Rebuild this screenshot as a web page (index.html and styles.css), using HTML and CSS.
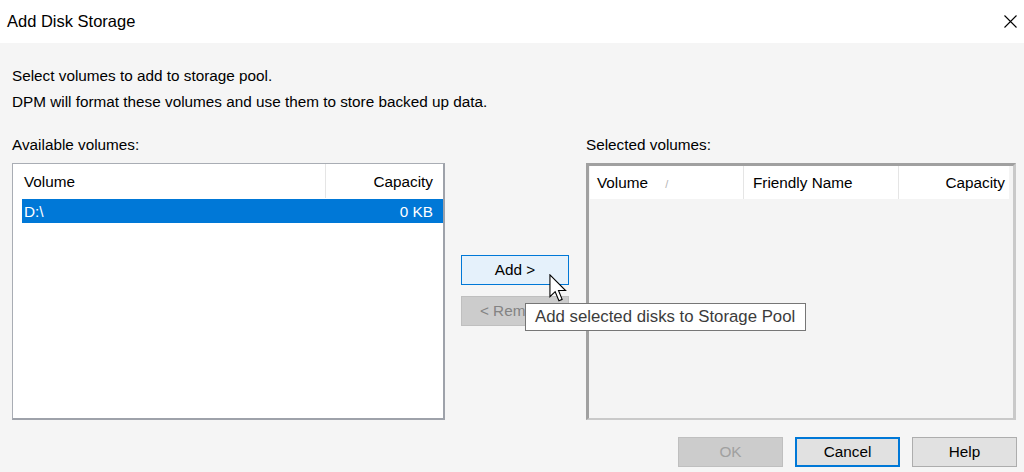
FILE: index.html
```html
<!DOCTYPE html>
<html lang="en">
<head>
    <meta charset="UTF-8">
    <title>Add Disk Storage</title>
    <link rel="stylesheet" href="styles.css">
</head>
<body>
    <div class="titlebar">
        <span class="title">Add Disk Storage</span>
        <button class="close" aria-label="Close">
            <svg width="13" height="13" viewBox="0 0 13 13">
                <path d="M0.5 0.5 L12.5 12.5 M12.5 0.5 L0.5 12.5" stroke="#000" stroke-width="1.1" fill="none"/>
            </svg>
        </button>
    </div>

    <div class="content">
        <p class="intro">Select volumes to add to storage pool.</p>
        <p class="intro">DPM will format these volumes and use them to store backed up data.</p>

        <div class="panes">
            <div class="pane pane-left">
                <div class="pane-label">Available volumes:</div>
                <div class="list list-available">
                    <div class="list-header">
                        <div class="col col-volume">Volume</div>
                        <div class="col col-capacity">Capacity</div>
                    </div>
                    <div class="list-row selected">
                        <span class="cell-volume">D:\</span>
                        <span class="cell-capacity">0 KB</span>
                    </div>
                </div>
            </div>

            <div class="mover">
                <button class="btn btn-add">Add &gt;</button>
                <button class="btn btn-remove" disabled>&lt; Remove</button>
                <div class="tooltip">Add selected disks to Storage Pool</div>
                <svg class="pointer" width="19" height="29" viewBox="0 0 13 20">
                    <path d="M0.6 0.6 L0.6 15.6 L4.2 12.2 L6.8 18.4 L9 17.5 L6.5 11.4 L11.4 11.4 Z" fill="#fff" stroke="#000" stroke-width="0.75" stroke-linejoin="miter"/>
                </svg>
            </div>

            <div class="pane pane-right">
                <div class="pane-label">Selected volumes:</div>
                <div class="list list-selected">
                    <div class="list-header">
                        <div class="col col-sel-volume">Volume <span class="sort">/</span></div>
                        <div class="col col-friendly">Friendly Name</div>
                        <div class="col col-sel-capacity">Capacity</div>
                    </div>
                </div>
            </div>
        </div>

        <div class="actions">
            <button class="btn btn-dialog btn-ok" disabled>OK</button>
            <button class="btn btn-dialog btn-cancel">Cancel</button>
            <button class="btn btn-dialog btn-help">Help</button>
        </div>
    </div>
</body>
</html>
```

FILE: styles.css
```css
body {
    margin: 0;
    font-family: "Liberation Sans", Arial, sans-serif;
    font-size: 15.3px;
    color: #000;
    background-color: #f5f5f5;
    height: 472px;
    overflow: hidden;
}
/* Title bar */
.titlebar {
    height: 43px;
    background: #fff;
    display: flex;
    align-items: center;
    justify-content: space-between;
    padding-left: 7px;
}
.title {
    font-size: 16.5px;
    line-height: 43px;
}
.close {
    width: 20px;
    height: 43px;
    margin-right: 4px;
    padding: 0;
    border: none;
    background: none;
    display: flex;
    align-items: center;
    justify-content: center;
}
/* Content */
.content {
    padding: 24px 7px 0 12px;
}
.intro {
    margin: 0;
    line-height: 18px;
}
.intro + .intro {
    margin-top: 8px;
}
.panes {
    display: flex;
    margin-top: 25px;
}
.pane-label {
    line-height: 18px;
    margin-bottom: 9px;
}
.pane-left {
    width: 433px;
}
.pane-right {
    width: 430px;
}
.list {
    height: 257px;
    box-sizing: border-box;
}
.list-available {
    background: #fff;
    border: 1px solid #a9adb4;
    border-right-width: 2px;
    border-bottom-width: 2px;
    border-right-color: #9ea2aa;
    border-bottom-color: #9ea2aa;
}
.list-selected {
    background: #f4f4f4;
    border-style: solid;
    border-width: 3px 3px 2px 3px;
    border-color: #a0a0a0 #c9c9c9 #c9c9c9 #a0a0a0;
}
.list-header {
    display: flex;
    background: #fff;
    height: 34px;
}
.col {
    box-sizing: border-box;
    padding-top: 1px;
    line-height: 33px;
    white-space: nowrap;
}
.col-volume {
    width: 313px;
    padding-left: 11px;
    border-right: 1px solid #e5e5e5;
}
.col-capacity {
    flex: 1;
    text-align: right;
    padding-right: 10px;
}
.list-row {
    display: flex;
    justify-content: space-between;
    margin: 1px 0 0 9px;
    height: 24px;
    box-sizing: border-box;
    padding: 2px 10px 0 2px;
    line-height: 22px;
}
.list-row.selected {
    background: #0078d7;
    color: #fff;
}
/* Selected volumes header */
.list-selected .list-header {
    width: 419px;
    height: 33px;
    margin-left: 1px;
}
.list-selected .col {
    padding-top: 0;
}
.col-sel-volume {
    width: 154px;
    padding-left: 7px;
    border-right: 1px solid #e5e5e5;
}
.sort {
    font-size: 11px;
    color: #b4b4b4;
    margin-left: 13px;
}
.col-friendly {
    width: 155px;
    padding-left: 9px;
    border-right: 1px solid #e5e5e5;
}
.col-sel-capacity {
    flex: 1;
    text-align: right;
    padding-right: 4px;
}
/* Middle buttons */
.mover {
    position: relative;
    width: 108px;
    margin: 0 17px 0 16px;
    padding-top: 119px;
}
.btn {
    display: block;
    box-sizing: border-box;
    font: inherit;
    color: #000;
    padding: 0;
    cursor: default;
}
.btn-add,
.btn-remove {
    width: 108px;
    height: 30px;
}
.btn-add {
    background: #e5f1fb;
    border: 1px solid #0078d7;
}
.btn-remove {
    margin-top: 11px;
    background: #cccccc;
    border: 1px solid #bfbfbf;
    color: #838383;
}
.tooltip {
    position: absolute;
    left: 64px;
    top: 167px;
    width: 281px;
    height: 28px;
    box-sizing: border-box;
    background: #fff;
    border: 1px solid #767676;
    padding-left: 9px;
    font-size: 16.8px;
    line-height: 25px;
    color: #3c3c3c;
    white-space: nowrap;
}
.pointer {
    position: absolute;
    left: 88px;
    top: 138px;
}
/* Dialog buttons */
.actions {
    display: flex;
    justify-content: flex-end;
    gap: 12px;
    margin-top: 17px;
}
.btn-dialog {
    width: 105px;
    height: 30px;
    background: #e1e1e1;
    border: 1px solid #adadad;
}
.btn-ok {
    background: #cccccc;
    border-color: #bfbfbf;
    color: #a0a0a0;
}
.btn-cancel {
    border: 2px solid #0078d7;
}
```
